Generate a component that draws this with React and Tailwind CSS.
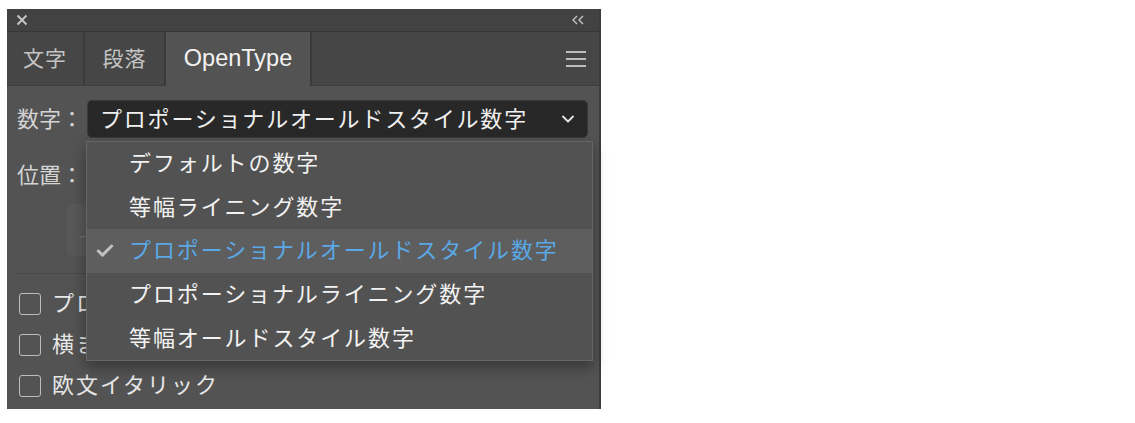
import { Check, ChevronDown } from 'lucide-react'

const font = { fontFamily: '"Liberation Sans", "Noto Sans CJK JP", sans-serif' }

const options = [
    'デフォルトの数字',
    '等幅ライニング数字',
    'プロポーショナルオールドスタイル数字',
    'プロポーショナルライニング数字',
    '等幅オールドスタイル数字',
]

const Checkbox = ({ label }) => (
    <div className="flex items-center gap-[11px] h-[41px] pl-[2px]">
        <div className="w-[22px] h-[22px] rounded-[3px] border-[1.5px] border-[#bdbdbd]" />
        <span className="text-[22px] tracking-[2px] text-[#e6e6e6]">{label}</span>
    </div>
)

export default function App() {
    const selected = 2

    return (
        <div className="min-h-screen bg-white pl-[7px] pt-[9px]" style={font}>
            <div className="relative w-[594px] h-[400px] bg-[#535353] border-r-2 border-[#3c3c3c] flex flex-col">
                {/* title bar */}
                <div className="h-[23px] bg-[#424242] border-b-[1.5px] border-[#363636] flex items-center justify-between pl-[9px] pr-[14px]">
                    <svg width="12" height="12" viewBox="0 0 12 12" className="text-[#c4c4c4]">
                        <path d="M1.5 1.5 L10.5 10.5 M10.5 1.5 L1.5 10.5" stroke="currentColor" strokeWidth="2" />
                    </svg>
                    <svg width="14" height="10" viewBox="0 0 14 10" className="text-[#c4c4c4]">
                        <path d="M6 1 L2 5 L6 9 M12 1 L8 5 L12 9" stroke="currentColor" strokeWidth="1.4" fill="none" />
                    </svg>
                </div>

                {/* tabs */}
                <div className="h-[54px] bg-[#464646] flex items-stretch border-b border-[#3d3d3d]">
                    <div className="w-[78px] flex items-center justify-center text-[21px] tracking-[1px] text-[#c4c4c4] border-r-2 border-[#3a3a3a]">文字</div>
                    <div className="w-[81px] flex items-center justify-center text-[21px] tracking-[1px] text-[#c4c4c4] border-r-2 border-[#3a3a3a]">段落</div>
                    <div className="w-[146px] -mb-px flex items-center justify-center text-[23.5px] text-[#f2f2f2] bg-[#535353] border-r-2 border-[#3a3a3a]">OpenType</div>
                    <div className="flex-1 flex items-center justify-end pr-[13px]">
                        <div className="flex flex-col gap-[5px]">
                            <div className="w-[20px] h-[2px] bg-[#bdbdbd]" />
                            <div className="w-[20px] h-[2px] bg-[#bdbdbd]" />
                            <div className="w-[20px] h-[2px] bg-[#bdbdbd]" />
                        </div>
                    </div>
                </div>

                {/* content */}
                <div className="flex-1 pl-[10px] pr-[11px] pt-[14px] flex flex-col">
                    <div className="flex items-center h-[38px]">
                        <span className="w-[70px] text-[22px] text-[#d4d4d4]">数字：</span>
                        <div className="flex-1 h-[38px] rounded-[5px] bg-[#282828] border border-[#3a3a3a] flex items-center justify-between pl-[12px] pr-[9px]">
                            <span className="text-[22px] tracking-[1.8px] text-[#f0f0f0]">{options[selected]}</span>
                            <ChevronDown size={20} strokeWidth={2.2} className="text-[#e6e6e6]" />
                        </div>
                    </div>

                    <div className="flex items-center h-[38px] mt-[18px]">
                        <span className="w-[70px] text-[22px] text-[#d4d4d4]">位置：</span>
                        <div className="flex-1 h-[38px] rounded-[5px] bg-[#4e4e4e]" />
                    </div>

                    <div className="flex gap-2 pl-[50px] mt-[10px]">
                        <div className="w-[60px] h-[52px] rounded-[5px] bg-[#585858] flex items-center pl-[12px] text-[20px] text-[#707070]">上</div>
                    </div>

                    <div className="h-px bg-[#484848] mt-[17px]" />

                    <div className="flex flex-col pt-[9px]">
                        <Checkbox label="プロポーショナルメトリクス" />
                        <Checkbox label="横または縦組み文字" />
                        <Checkbox label="欧文イタリック" />
                    </div>
                </div>

                {/* open menu */}
                <div className="absolute left-[79px] top-[132px] w-[507px] bg-[#525252] border-[1.5px] border-[#666666] shadow-[0_6px_14px_rgba(0,0,0,0.35)] flex flex-col">
                    {options.map((o, i) => (
                        <div
                            key={o}
                            className={`h-[43.6px] flex items-center ${i === selected ? 'bg-[#5e5e5e] text-[#5aa8e6]' : 'text-[#f2f2f2]'}`}
                        >
                            <div className="w-[42px] flex justify-start pl-[8px]">
                                {i === selected && <Check size={20} strokeWidth={3.6} className="text-[#c0c0c0]" />}
                            </div>
                            <span className="text-[22px] tracking-[1.9px]">{o}</span>
                        </div>
                    ))}
                </div>
            </div>
        </div>
    )
}
